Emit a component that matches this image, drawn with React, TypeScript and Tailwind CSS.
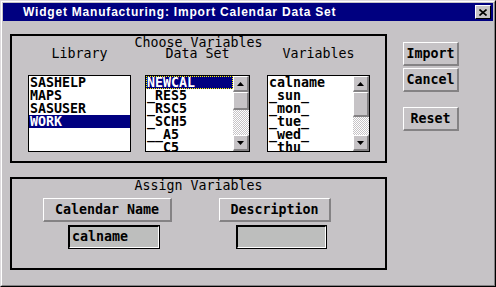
import React from "react";

const bevel =
  "border-t border-l border-t-white border-l-white border-b-2 border-r-2 border-b-[#848284] border-r-[#848284] bg-[#c6c3c6]";

function Arrow({ down }: { down?: boolean }) {
  return (
    <svg width="7" height="4" viewBox="0 0 7 4">
      {down ? (
        <polygon points="0,0 7,0 3.5,4" fill="#000" />
      ) : (
        <polygon points="0,4 3.5,0 7,4" fill="#000" />
      )}
    </svg>
  );
}

function ScrollBar({ thumb }: { thumb: number }) {
  return (
    <div className="w-[16px] h-full flex flex-col">
      <div className={`h-[16px] flex items-center justify-center ${bevel}`}>
        <Arrow />
      </div>
      <div className={`${bevel}`} style={{ height: thumb }} />
      <div className="flex-1 bg-[repeating-conic-gradient(#ffffff_0%_25%,#c6c3c6_0%_50%)] bg-[length:2px_2px]" />
      <div className={`h-[16px] flex items-center justify-center ${bevel}`}>
        <Arrow down />
      </div>
    </div>
  );
}

function Row({ text, selected, focus }: { text: string; selected?: boolean; focus?: boolean }) {
  return (
    <div
      className={`h-[13px] leading-[13px] pl-[1px] whitespace-pre font-bold ${
        selected ? "bg-[#000080] text-white" : "text-black"
      } ${focus ? "outline outline-1 outline-dotted outline-offset-[-1px] outline-[#ffff00]" : ""}`}
    >
      {text}
    </div>
  );
}

function ListBox({
  items,
  selected,
  focus,
  thumb,
}: {
  items: string[];
  selected?: number;
  focus?: boolean;
  thumb?: number;
}) {
  return (
    <div className="mt-[16px] h-[77px] border border-black bg-white flex">
      <div className="flex-1 overflow-hidden">
        {items.map((t, i) => (
          <Row key={i} text={t} selected={i === selected} focus={focus && i === selected} />
        ))}
      </div>
      {thumb !== undefined && <ScrollBar thumb={thumb} />}
    </div>
  );
}

function Button({ label, className }: { label: string; className: string }) {
  return (
    <div className={`h-[24px] flex items-center justify-center font-bold leading-none ${bevel} ${className}`}>
      {label}
    </div>
  );
}

function Field({ value, className }: { value: string; className: string }) {
  return (
    <div className={`h-[24px] border border-black ${className}`}>
      <div className="h-full border-t border-l border-t-black border-l-black border-r border-b border-r-white border-b-white bg-[#bdbebd] pl-[2px] flex items-center font-bold leading-none">
        {value}
      </div>
    </div>
  );
}

export default function App() {
  return (
    <div className="w-[496px] h-[287px] bg-[#c6c3c6] border border-t-[#dedbde] border-l-[#dedbde] border-r-black border-b-black font-['DejaVu_Sans_Mono',monospace] text-[13.3px] text-black">
      <div className="h-full flex flex-col border border-t-white border-l-white border-r-[#848284] border-b-[#848284]">
        <div className="m-[1px] h-[18px] bg-[#000080] flex items-center">
          <span className="ml-[20px] text-white font-bold text-[12px] tracking-[0.8px] leading-[18px] font-['Liberation_Sans',Arial,sans-serif] whitespace-pre">
            Widget Manufacturing: Import Calendar Data Set
          </span>
          <div className="ml-auto mr-[2px] w-[16px] h-[14px] flex items-center justify-center border-t border-l border-t-white border-l-white border-b border-r border-b-black border-r-black bg-[#c6c3c6]">
            <svg width="8" height="7" viewBox="0 0 8 7">
              <path d="M0.5 0.5 L7.5 6.5 M7.5 0.5 L0.5 6.5" stroke="#000" strokeWidth="1.6" />
            </svg>
          </div>
        </div>

        <div className="flex pl-[8px] pt-[12px]">
          <div className="w-[377px] flex flex-col">
            <div className="h-[129px] border-2 border-black flex flex-col">
              <div className="mt-[1px] h-[11px] leading-[11px] text-center">Choose Variables</div>
              <div className="flex pl-[16px]">
                <div className="w-[103px] flex flex-col">
                  <div className="h-[11px] leading-[11px] text-center">Library</div>
                  <ListBox items={["SASHELP", "MAPS", "SASUSER", "WORK"]} selected={3} />
                </div>
                <div className="ml-[14px] w-[105px] flex flex-col">
                  <div className="h-[11px] leading-[11px] text-center">Data Set</div>
                  <ListBox
                    items={["NEWCAL", "_RES5", "_RSC5", "_SCH5", "__A5", "__C5"]}
                    selected={0}
                    focus
                    thumb={18}
                  />
                </div>
                <div className="ml-[17px] w-[103px] flex flex-col">
                  <div className="h-[11px] leading-[11px] text-center">Variables</div>
                  <ListBox
                    items={["calname", "_sun_", "_mon_", "_tue_", "_wed_", "_thu_"]}
                    thumb={25}
                  />
                </div>
              </div>
            </div>

            <div className="mt-[14px] h-[93px] border-2 border-black flex flex-col">
              <div className="mt-[1px] h-[11px] leading-[11px] text-center">Assign Variables</div>
              <div className="mt-[7px] flex pl-[31px]">
                <div className="flex flex-col items-start">
                  <Button label="Calendar Name" className="w-[129px]" />
                  <Field value="calname" className="mt-[3px] ml-[25px] w-[92px]" />
                </div>
                <div className="ml-[47px] flex flex-col items-start">
                  <Button label="Description" className="w-[112px]" />
                  <Field value="" className="mt-[3px] ml-[17px] w-[91px]" />
                </div>
              </div>
            </div>
          </div>

          <div className="ml-[16px] pt-[8px] w-[56px] flex flex-col">
            <Button label="Import" className="w-[56px]" />
            <Button label="Cancel" className="mt-[2px] w-[56px]" />
            <Button label="Reset" className="mt-[15px] w-[56px]" />
          </div>
        </div>
      </div>
    </div>
  );
}
